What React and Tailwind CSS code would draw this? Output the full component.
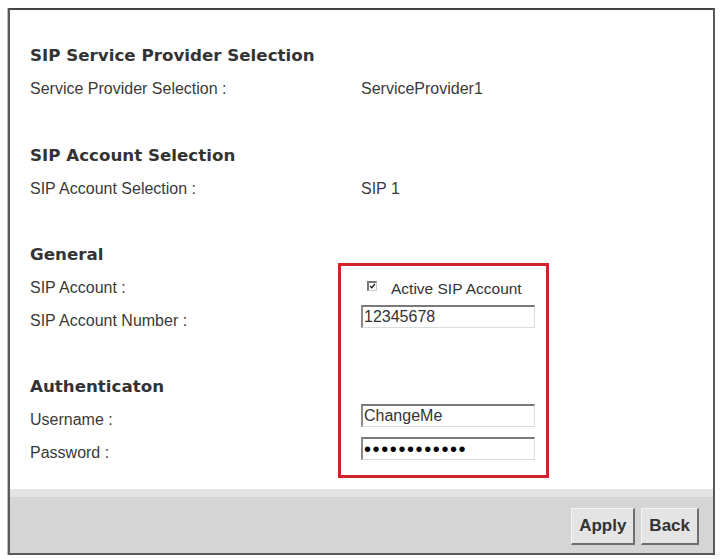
import React from "react";

const label = "text-[16px] text-[#3a3a3a]";
const heading = "text-[16.7px] font-bold text-[#333]";

function Row({ name, children }) {
  return (
    <div className="flex h-[33px] items-center">
      <div className={`w-[331px] ${label}`}>{name}</div>
      <div className="flex flex-1 items-center">{children}</div>
    </div>
  );
}

function Heading({ children }) {
  return (
    <div className="flex h-[33px] items-center">
      <div className={heading} style={{ fontFamily: "'DejaVu Sans', Verdana, sans-serif" }}>
        {children}
      </div>
    </div>
  );
}

function Field({ children }) {
  return (
    <div className="mb-[9px] flex h-[23px] w-[174px] items-center border-t-2 border-l-2 border-r border-b border-t-[#7a7a7a] border-l-[#8a8a8a] border-r-[#dcdcdc] border-b-[#dcdcdc] bg-white pl-[1px] text-[16px] text-[#333]">
      {children}
    </div>
  );
}

function Button({ children }) {
  return (
    <button className="h-[37px] border-t border-l border-r-2 border-b-2 border-t-[#f4f4f4] border-l-[#f4f4f4] border-r-[#6e6e6e] border-b-[#6e6e6e] bg-[#e4e4e4] px-[7px] text-[17px] font-bold text-[#333]">
      {children}
    </button>
  );
}

export default function App() {
  return (
    <div
      className="h-[559px] w-[720px] bg-white pl-[8px] pt-[8px]"
      style={{ fontFamily: "'Liberation Sans', Arial, sans-serif" }}
    >
      <div className="relative flex h-[547px] w-[707px] flex-col border-2 border-[#5a5a5a] border-t-[#444] shadow-[-1px_0_0_#bbb]">
        <div className="flex flex-1 flex-col bg-white pl-[20px] pt-[29px]">
          <div className="flex flex-col">
            <Heading>SIP Service Provider Selection</Heading>
            <Row name="Service Provider Selection :">
              <span className={label}>ServiceProvider1</span>
            </Row>
          </div>

          <div className="mt-[34px] flex flex-col">
            <Heading>SIP Account Selection</Heading>
            <Row name="SIP Account Selection :">
              <span className={label}>SIP 1</span>
            </Row>
          </div>

          <div className="mt-[33px] flex flex-col">
            <Heading>General</Heading>
            <Row name="SIP Account :">
              <div className="ml-[6px] flex items-center">
                <span className="mb-[4px] flex h-[10px] w-[10px] items-center justify-center border-t-2 border-l-2 border-r border-b border-t-[#777] border-l-[#777] border-r-[#ccc] border-b-[#ccc] bg-white">
                  <svg viewBox="0 0 10 10" className="h-[8px] w-[8px]">
                    <path d="M1.5 5 L4 7.5 L8.5 2" fill="none" stroke="#222" strokeWidth="2" />
                  </svg>
                </span>
                <span className="ml-[14px] mt-[2px] text-[15.5px] text-[#333]">Active SIP Account</span>
              </div>
            </Row>
            <Row name="SIP Account Number :">
              <Field>12345678</Field>
            </Row>
          </div>

          <div className="mt-[33px] flex flex-col">
            <Heading>Authenticaton</Heading>
            <Row name="Username :">
              <Field>ChangeMe</Field>
            </Row>
            <Row name="Password :">
              <Field>
                <span className="text-[20px] leading-none tracking-[1.6px] text-black">
                  ••••••••••••
                </span>
              </Field>
            </Row>
          </div>
        </div>

        <div className="flex h-[64px] flex-col bg-[#d5d5d5]">
          <div className="h-[8px] bg-[#e3e3e3]" />
          <div className="flex flex-1 items-start justify-end gap-[6px] pr-[14px] pt-[11px]">
            <Button>Apply</Button>
            <Button>Back</Button>
          </div>
        </div>

        <div className="pointer-events-none absolute left-[328px] top-[253px] h-[215px] w-[211px] border-[3px] border-[#d1232a]" />
      </div>
    </div>
  );
}
